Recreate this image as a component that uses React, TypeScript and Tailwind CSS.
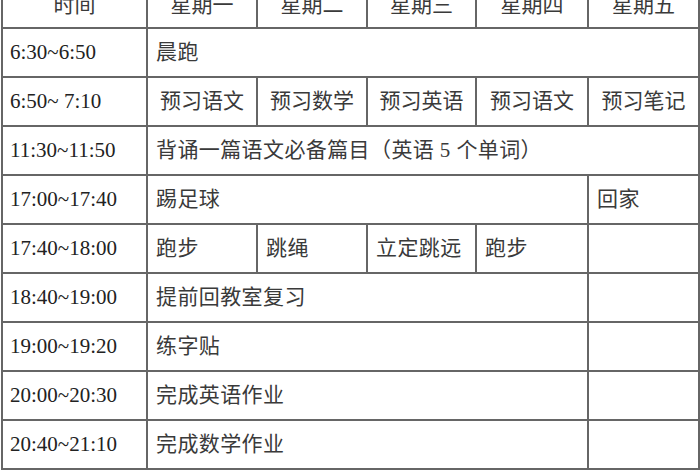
import React from "react";

const font = {
  fontFamily: '"Liberation Serif", "Noto Sans CJK SC", serif',
};

const td = "border-2 border-[#666] h-[49px] pl-[8px] pr-0 text-left align-middle whitespace-nowrap tracking-[0.4px]";
const tc = "border-2 border-[#666] h-[49px] px-0 text-center align-middle whitespace-nowrap";
const th = "border-2 border-[#666] h-[46px] px-0 text-center align-middle whitespace-nowrap";
const tt = "border-2 border-[#666] h-[49px] pl-[7px] text-left align-middle whitespace-nowrap text-[#222]";

const rows: { time: string; cells: { text: string; span?: number }[] }[] = [
  { time: "11:30~11:50", cells: [{ text: "背诵一篇语文必备篇目（英语 5 个单词）", span: 5 }] },
  { time: "17:00~17:40", cells: [{ text: "踢足球", span: 4 }, { text: "回家" }] },
  { time: "17:40~18:00", cells: [{ text: "跑步" }, { text: "跳绳" }, { text: "立定跳远" }, { text: "跑步" }, { text: "" }] },
  { time: "18:40~19:00", cells: [{ text: "提前回教室复习", span: 4 }, { text: "" }] },
  { time: "19:00~19:20", cells: [{ text: "练字贴", span: 4 }, { text: "" }] },
  { time: "20:00~20:30", cells: [{ text: "完成英语作业", span: 4 }, { text: "" }] },
  { time: "20:40~21:10", cells: [{ text: "完成数学作业", span: 4 }, { text: "" }] },
];

export default function App() {
  return (
    <div className="w-[700px] h-[470px] overflow-hidden bg-white">
      <table
        className="mt-[-19px] ml-[1px] border-collapse table-fixed text-[21px] text-[#3a3a3a] leading-none"
        style={font}
      >
        <colgroup>
          <col className="w-[145px]" />
          <col className="w-[110px]" />
          <col className="w-[110px]" />
          <col className="w-[109px]" />
          <col className="w-[112px]" />
          <col className="w-[111px]" />
        </colgroup>
        <tbody>
          <tr>
            <td className={th}>时间</td>
            <td className={th}>星期一</td>
            <td className={th}>星期二</td>
            <td className={th}>星期三</td>
            <td className={th}>星期四</td>
            <td className={th}>星期五</td>
          </tr>
          <tr>
            <td className={tt}>6:30~6:50</td>
            <td className={td} colSpan={5}>晨跑</td>
          </tr>
          <tr>
            <td className={tt}>6:50~ 7:10</td>
            <td className={tc}>预习语文</td>
            <td className={tc}>预习数学</td>
            <td className={tc}>预习英语</td>
            <td className={tc}>预习语文</td>
            <td className={tc}>预习笔记</td>
          </tr>
          {rows.map((r) => (
            <tr key={r.time}>
              <td className={tt}>{r.time}</td>
              {r.cells.map((c, i) => (
                <td key={i} className={td} colSpan={c.span}>
                  {c.text}
                </td>
              ))}
            </tr>
          ))}
        </tbody>
      </table>
    </div>
  );
}
